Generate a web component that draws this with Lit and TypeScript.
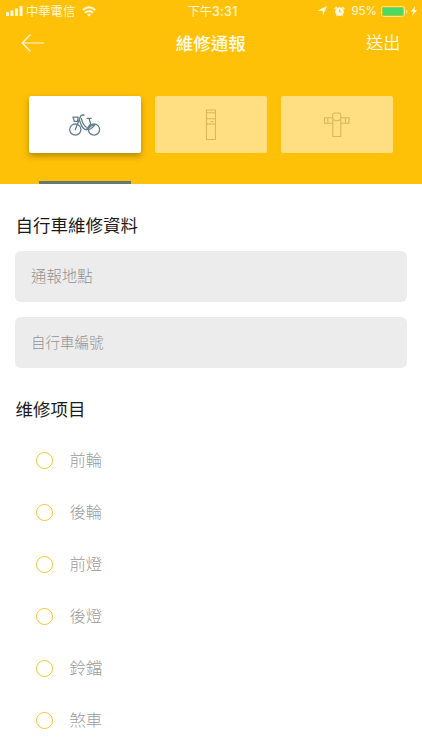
import { LitElement, html, css, svg } from "lit";
import { customElement, property } from "lit/decorators.js";
import { classMap } from "lit/directives/class-map.js";

const bikeIcon = svg`
  <svg width="34" height="26" viewBox="0 0 34 26" fill="none" stroke="currentColor" stroke-width="1.3" stroke-linecap="round" stroke-linejoin="round">
    <circle cx="7.3" cy="17.6" r="5.6"/>
    <circle cx="26" cy="17.6" r="5.6"/>
    <path d="M5 5.1h5.1l-.6 4.2H6.2Z"/>
    <path d="M16 3h-1.2c-1.6 0-2.3 1.2-2.7 2.6L7.3 17.6"/>
    <path d="M11.3 7.8c1.4 4.4 3 9.8 7 9.8 2.6 0 3.4-4.8 8.4-4.4"/>
    <path d="M13.3 6.6c1 3.8 2.6 7 5 8.6"/>
    <path d="M19 6.3h4.2M21 6.3l1.6 5.6-4.3 5.7q4.3.6 7.7-3.8"/>
  </svg>`;

const kioskIcon = svg`
  <svg width="12" height="32" viewBox="0 0 12 32" fill="none" stroke="currentColor" stroke-width="1.1">
    <path d="M1.5 1h9v29.5h-9ZM1.5 3.8h9M1.5 9.8h9M1.5 13.8q.4 1.2 1.4 1.2h6.2q1 0 1.4-1.2"/>
    <path d="M5.8 12.6h2.7"/>
  </svg>`;

const dockIcon = svg`
  <svg width="27" height="26" viewBox="0 0 27 26" fill="none" stroke="currentColor" stroke-width="1.1" stroke-linejoin="round">
    <path d="M9.8 8v16.5h8V8"/>
    <path d="M11.2 1h5.2q1.4 0 1.4 1.4v4.8q-1.4 1.6-4 1.6t-4-1.6V2.4Q9.8 1 11.2 1Z"/>
    <path d="M9.8 5.8H1.5v5.4h8.3M4.8 5.8v5.4M17.8 5.8H26v5.4h-8.2M22.5 5.8v5.4"/>
  </svg>`;

@customElement("status-bar")
class StatusBar extends LitElement {
  static styles = css`
    :host { display: grid; grid-template-columns: 1fr auto 1fr; align-items: center; height: 21px; padding: 0 5px 0 6px; color: #fff6d8; font-size: 12px; line-height: 21px; }
    .side { display: flex; align-items: center; }
    .right { justify-content: flex-end; }
    .carrier { margin: 0 7px 0 3px; font-size: 12.3px; font-weight: 400; }
    .time { padding-left: 2px; font-size: 12.3px; }
    .clock { font-family: Inter, sans-serif; font-size: 12.4px; font-weight: 500; letter-spacing: .3px; }
    .arrow { margin-right: 7px; }
    .alarm { margin-right: 6px; }
    .percent { margin-right: 4px; font-family: Inter, sans-serif; font-size: 11.6px; line-height: 22px; }
    .bolt { margin-left: 3px; }
    svg { display: block; flex: none; }
  `;
  render() {
    return html`
      <div class="side">
        <svg width="17" height="10" viewBox="0 0 17 10" fill="currentColor"><rect y="6" width="3" height="4" rx=".6"/><rect x="4.5" y="4.3" width="3" height="5.7" rx=".6"/><rect x="9" y="2.2" width="3" height="7.8" rx=".6"/><rect x="13.5" width="3" height="10" rx=".6"/></svg>
        <span class="carrier">中華電信</span>
        <svg width="14" height="11" viewBox="0 0 14 11" fill="none" stroke="currentColor" stroke-width="2"><path d="M.8 4.1Q7-1.6 13.2 4.1M3 6.8q4-3.7 8 0"/><path d="M7 10.5 4.8 8.4q2.2-1.6 4.4 0Z" fill="currentColor" stroke="none"/></svg>
      </div>
      <span class="time">下午<span class="clock">3:31</span></span>
      <div class="side right">
        <svg class="arrow" width="10" height="10" viewBox="0 0 10 10" fill="currentColor"><path d="M10 0 5.8 10V5.1L0 4.8Z"/></svg>
        <svg class="alarm" width="11" height="11" viewBox="0 0 11 11"><path d="M.6 3 2.8 1M10.4 3 8.2 1" stroke="currentColor" stroke-width="1.3"/><path d="M2.6 9.2 2 10.2M8.4 9.2l.6 1" stroke="currentColor"/><circle cx="5.5" cy="5.7" r="4.4" fill="currentColor"/><path d="M5.5 3.4v2.4h1.8" fill="none" stroke="#ffc107" stroke-width=".9"/></svg>
        <span class="percent">95%</span>
        <svg width="27" height="11" viewBox="0 0 27 11"><rect x=".5" y=".5" width="23" height="10" rx="2" fill="none" stroke="#ffe28a"/><rect x="1.5" y="1.5" width="20.5" height="8" rx=".8" fill="#4cd964"/><path d="M25 3.6q1.4.4 1.4 1.9T25 7.4Z" fill="#ffe28a"/></svg>
        <svg class="bolt" width="6" height="10" viewBox="0 0 6 10" fill="currentColor"><path d="M4.2 0 0 5.6h2.2L1.2 10 6 4.1H3.5Z"/></svg>
      </div>`;
  }
}

@customElement("form-field")
class FormField extends LitElement {
  @property() label = "";
  static styles = css`
    :host { display: flex; align-items: center; box-sizing: border-box; height: 51px; padding: 0 16px 3px; border-radius: 6px; background: #ececec; color: #929292; font-weight: 300; }
  `;
  render() {
    return html`<span>${this.label}</span>`;
  }
}

@customElement("app-root")
class AppRoot extends LitElement {
  static styles = css`
    :host { display: block; height: 750px; overflow: hidden; background: #fff; font-family: "Noto Sans CJK TC", sans-serif; }
    header { box-sizing: border-box; height: 183.5px; background: #ffc107; display: flex; flex-direction: column; }
    nav { display: grid; grid-template-columns: 1fr auto 1fr; align-items: center; height: 44px; padding: 0 21.5px 0 21px; color: #fffae8; }
    nav svg { display: block; }
    .title { font-size: 17.5px; font-weight: 500; line-height: 24px; padding-bottom: 1px; }
    .send { justify-self: end; font-size: 17.2px; font-weight: 350; line-height: 24px; padding-bottom: 2px; }
    .tabs { display: flex; gap: 14px; margin: 31px 29px 0 28.5px; }
    .tab { flex: 1; height: 57px; display: flex; align-items: center; justify-content: center; border-radius: 2px; background: #ffdf82; color: #d6b957; }
    .tab.active { background: #fff; color: #607d8b; box-shadow: 0 3px 6px rgba(110, 85, 0, .5); }
    .tab svg { display: block; }
    .indicator { width: 92px; height: 3px; margin: auto 0 0 39px; background: #66777a; }
    main { padding: 0 15px; }
    h2 { margin: 0; padding-left: .5px; font-size: 17.5px; line-height: 26px; font-weight: 400; color: #1b1b1b; }
    .info { margin: 28.5px 0 13px; }
    .items { margin-top: 28px; font-family: "Noto Sans CJK SC", sans-serif; }
    .place { font-size: 15.4px; }
    .number { margin-top: 15px; font-size: 14.5px; }
    ul { list-style: none; margin: 12px 0 0; padding: 0 0 0 21.4px; }
    li { display: flex; align-items: center; gap: 16.1px; height: 52px; font-size: 16.4px; font-weight: 300; color: #9c9c9c; }
    .radio { box-sizing: border-box; width: 17px; height: 17px; border: 1.5px solid #f3c534; border-radius: 50%; }
    .name { padding-bottom: 2px; }
  `;
  render() {
    const tabs = [bikeIcon, kioskIcon, dockIcon];
    const parts = ["前輪", "後輪", "前燈", "後燈", "鈴鐺", "煞車"];
    return html`
      <header>
        <status-bar></status-bar>
        <nav>
          <svg width="24" height="20" viewBox="0 0 24 20" fill="none" stroke="currentColor" stroke-width="1.2"><path d="M23 10H1.2M9.5 1.5 1.2 10l8.3 8.5"/></svg>
          <span class="title">維修通報</span>
          <span class="send">送出</span>
        </nav>
        <div class="tabs">${tabs.map((icon, i) => html`<div class=${classMap({ tab: true, active: i === 0 })}>${icon}</div>`)}</div>
        <div class="indicator"></div>
      </header>
      <main>
        <h2 class="info">自行車維修資料</h2>
        <form-field class="place" label="通報地點"></form-field>
        <form-field class="number" label="自行車編號"></form-field>
        <h2 class="items">维修项目</h2>
        <ul>${parts.map((p) => html`<li><span class="radio"></span><span class="name">${p}</span></li>`)}</ul>
      </main>`;
  }
}
